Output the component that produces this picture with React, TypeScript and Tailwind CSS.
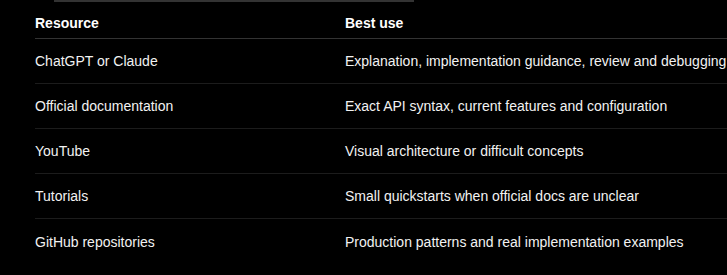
import React from "react";

const rows = [
  { resource: "ChatGPT or Claude", use: "Explanation, implementation guidance, review and debugging" },
  { resource: "Official documentation", use: "Exact API syntax, current features and configuration" },
  { resource: "YouTube", use: "Visual architecture or difficult concepts" },
  { resource: "Tutorials", use: "Small quickstarts when official docs are unclear" },
  { resource: "GitHub repositories", use: "Production patterns and real implementation examples" },
];

const App = () => {
  return (
    <div
      className="w-[727px] h-[275px] bg-black text-[#f2f2f2] overflow-hidden"
      style={{ fontFamily: '"Liberation Sans", Arial, sans-serif' }}
    >
      <div className="ml-[54px] w-[360px] h-[2px] bg-[#333333]" />
      <div className="pl-[35px]">
        <div className="w-[760px] text-[14px]">
          <div className="grid grid-cols-[310px_1fr] h-[37px] items-center pt-[6px] border-b border-[#333333] font-bold text-white">
            <div>Resource</div>
            <div>Best use</div>
          </div>
          {rows.map((row, i) => (
            <div
              key={row.resource}
              className={`grid grid-cols-[310px_1fr] items-center h-[45px] pt-[1px] ${
                i < rows.length - 1 ? "border-b border-[#1c1c1c]" : ""
              }`}
            >
              <div>{row.resource}</div>
              <div className="whitespace-nowrap">{row.use}</div>
            </div>
          ))}
        </div>
      </div>
    </div>
  );
};

export default App;
